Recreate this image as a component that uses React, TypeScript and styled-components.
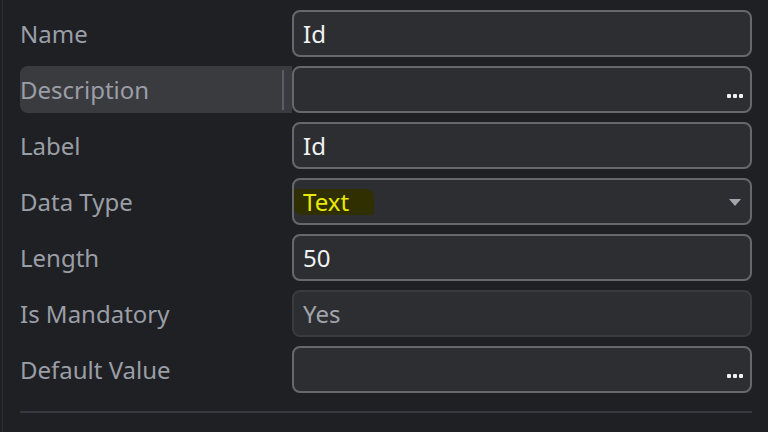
import React from 'react';
import styled, { createGlobalStyle } from 'styled-components';

const GlobalStyle = createGlobalStyle`
  html, body {
    margin: 0;
    padding: 0;
    background: #1f2024;
    height: 100%;
    overflow: hidden;
  }
  #root {
    height: 100%;
  }
`;

const Panel = styled.div`
  height: 100%;
  margin-left: 2px;
  border-left: 1px solid #2e2f34;
  padding: 10px 16px 0 17px;
  box-sizing: border-box;
  font-family: 'Noto Sans', 'Open Sans', sans-serif;
  font-size: 24px;
`;

const Rows = styled.div`
  display: flex;
  flex-direction: column;
  gap: 9px;
`;

const Row = styled.div`
  display: grid;
  grid-template-columns: 272px 1fr;
  height: 47px;
`;

const Label = styled.div<{ $active?: boolean }>`
  display: flex;
  align-items: center;
  justify-content: space-between;
  color: #9a9ea6;
  background: ${(p) => (p.$active ? '#3a3b3f' : 'transparent')};
  border-radius: 8px 0 0 8px;
`;

const Divider = styled.span`
  width: 2px;
  height: 40px;
  margin-right: 8px;
  background: #5c5d62;
`;

const Field = styled.div<{ $readOnly?: boolean }>`
  position: relative;
  display: flex;
  align-items: center;
  padding: 0 9px;
  border: 2px solid ${(p) => (p.$readOnly ? '#3a3b3f' : '#67686c')};
  border-radius: 8px;
  background: #2d2e32;
  color: ${(p) => (p.$readOnly ? '#a0a4aa' : '#f2f2f2')};
`;

const Dots = styled.span`
  position: absolute;
  right: 7px;
  bottom: 13px;
  display: flex;
  gap: 2px;
`;

const Dot = styled.span`
  width: 4px;
  height: 4px;
  border-radius: 1px;
  background: #f0f0f0;
`;

const Highlight = styled.span`
  margin-left: -9px;
  padding: 0 25px 0 9px;
  height: 26px;
  line-height: 26px;
  color: #e8e80a;
  background: #2f2f02;
  border-radius: 2px 8px 2px 8px;
`;

const Caret = styled.svg`
  position: absolute;
  right: 9px;
  top: 19px;
`;

const Rule = styled.div`
  margin-top: 18px;
  height: 2px;
  background: #38393e;
`;

const Ellipsis = () => (
  <Dots>
    <Dot />
    <Dot />
    <Dot />
  </Dots>
);

export default function App() {
  return (
    <>
      <GlobalStyle />
      <Panel>
        <Rows>
          <Row>
            <Label>Name</Label>
            <Field>Id</Field>
          </Row>
          <Row>
            <Label $active>
              Description
              <Divider />
            </Label>
            <Field>
              <Ellipsis />
            </Field>
          </Row>
          <Row>
            <Label>Label</Label>
            <Field>Id</Field>
          </Row>
          <Row>
            <Label>Data Type</Label>
            <Field>
              <Highlight>Text</Highlight>
              <Caret width="12" height="7" viewBox="0 0 12 7">
                <path d="M0 0h12L6 7z" fill="#a3a6ad" />
              </Caret>
            </Field>
          </Row>
          <Row>
            <Label>Length</Label>
            <Field>50</Field>
          </Row>
          <Row>
            <Label>Is Mandatory</Label>
            <Field $readOnly>Yes</Field>
          </Row>
          <Row>
            <Label>Default Value</Label>
            <Field>
              <Ellipsis />
            </Field>
          </Row>
        </Rows>
        <Rule />
      </Panel>
    </>
  );
}
